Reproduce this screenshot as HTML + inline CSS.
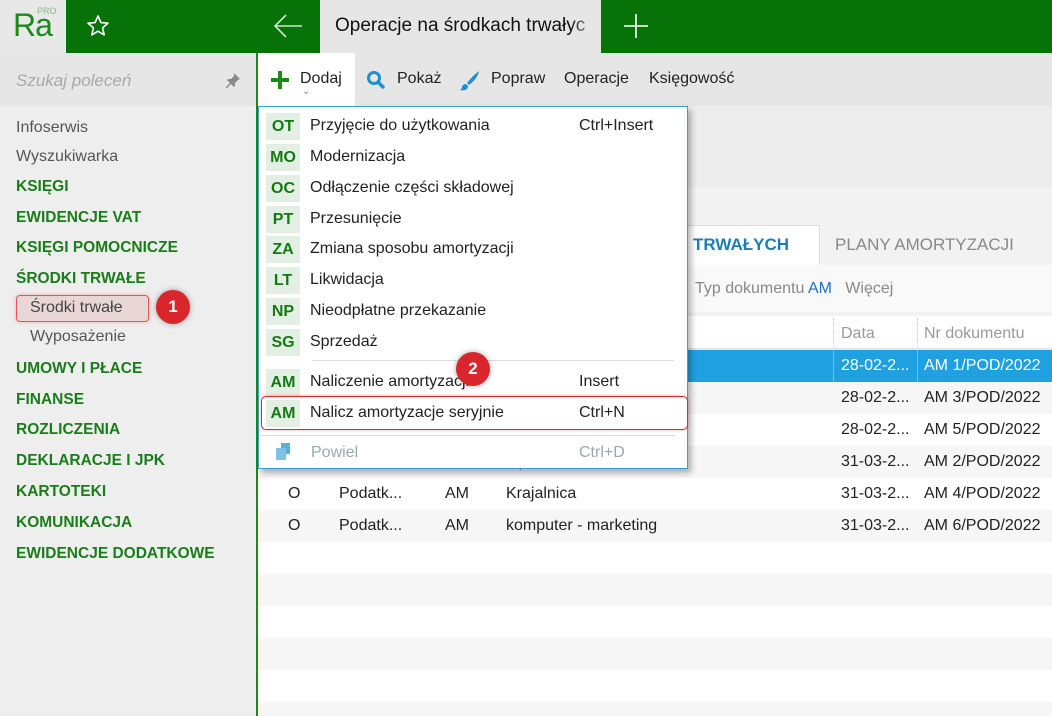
<!DOCTYPE html>
<html style="width:1052px;height:716px;overflow:hidden"><head><meta charset="utf-8"><style>
*{margin:0;padding:0;box-sizing:border-box}
body{width:1052px;height:716px;overflow:hidden;position:relative;font-family:"Segoe UI","Liberation Sans",sans-serif;font-size:16px;color:#222;background:#f2f2f2}
.a{position:absolute}
.g{color:#1a7d1a;font-weight:bold;font-size:15.5px}
.side div{position:absolute;left:16px;white-space:nowrap}
.row{position:absolute;left:258px;width:794px;height:32px}
.row span{position:absolute;top:7px;white-space:nowrap}
.mi{position:absolute;left:0;width:428px;height:31px}
.mi .b{position:absolute;left:7px;top:2px;width:34px;height:27px;background:#e4efe4;color:#137a13;font-weight:bold;font-size:16px;text-align:center;line-height:27px}
.mi .t{position:absolute;left:51px;top:6px;white-space:nowrap}
.mi .s{position:absolute;left:320px;top:6px;white-space:nowrap}
.badge{position:absolute;width:34px;height:34px;border-radius:50%;background:#d9262c;color:#fff;font-size:17px;font-weight:bold;text-align:center;line-height:34px;box-shadow:0 0 6px rgba(0,0,0,.35)}
</style></head><body>
<!-- top bar -->
<div class="a" style="left:0;top:0;width:66px;height:53px;background:#e8e8e8"></div>
<div class="a" style="left:13px;top:9px;font-size:32px;line-height:32px;color:#1a8a1a;font-family:'Liberation Sans Narrow','Liberation Sans',sans-serif;letter-spacing:-1px">Ra</div>
<div class="a" style="left:37px;top:6px;font-size:9px;color:#8ab88a;font-family:'Liberation Sans',sans-serif">PRO</div>
<div class="a" style="left:66px;top:0;width:254px;height:53px;background:#077207"></div>
<svg class="a" style="left:86px;top:14px" width="24" height="24" viewBox="0 0 24 24"><path d="M12 2l2.9 6.6 7.1.6-5.4 4.7 1.6 7-6.2-3.7-6.2 3.7 1.6-7L2 9.2l7.1-.6z" fill="none" stroke="#fff" stroke-width="1.6" stroke-linejoin="round"/></svg>
<svg class="a" style="left:273px;top:13px" width="30" height="26" viewBox="0 0 30 26"><path d="M29 13H2M13 2L2 13l11 11" fill="none" stroke="#cfe6cf" stroke-width="1.6"/></svg>
<div class="a" style="left:320px;top:0;width:281px;height:53px;background:#e6e6e6"></div>
<div class="a" style="left:335px;top:15px;font-size:19px;white-space:nowrap;width:250px;overflow:hidden;color:#111">Operacje na środkach trwałych</div>
<div class="a" style="left:570px;top:6px;width:31px;height:40px;background:linear-gradient(90deg,rgba(230,230,230,0),#e6e6e6)"></div>
<div class="a" style="left:601px;top:0;width:451px;height:53px;background:#077207"></div>
<svg class="a" style="left:623px;top:13px" width="26" height="26"><path d="M13 1v24M1 13h24" stroke="#fff" stroke-width="1.6"/></svg>
<!-- sidebar -->
<div class="a" style="left:0;top:53px;width:256px;height:663px;background:#eeeeee"></div>
<div class="a" style="left:0;top:53px;width:256px;height:53px;background:#e6e6e6"></div>
<div class="a" style="left:16px;top:71px;font-style:italic;color:#a8a8a8;font-size:17px">Szukaj poleceń</div>
<svg class="a" style="left:225px;top:72px" width="16" height="16" viewBox="0 0 16 16"><path d="M9 1l6 6-2 1-3 3 0 3-1 1-3-3-4 4-1 0 0-1 4-4-3-3 1-1 3 0 3-3z" fill="#8a8a8a"/></svg>
<div class="a" style="left:256px;top:53px;width:2px;height:663px;background:#1a8a1a"></div>
<div class="side">
<div style="top:119px;color:#555">Infoserwis</div>
<div style="top:148px;color:#555">Wyszukiwarka</div>
<div class="g" style="top:178px">KSIĘGI</div>
<div class="g" style="top:209px">EWIDENCJE VAT</div>
<div class="g" style="top:239px">KSIĘGI POMOCNICZE</div>
<div class="g" style="top:270px">ŚRODKI TRWAŁE</div>
<div class="a" style="left:16px;top:295px;width:133px;height:27px;border:1.5px solid #e8545a;border-radius:4px;background:#e9d7d8;box-shadow:0 0 4px rgba(230,80,80,.4)"></div>
<div style="left:30px;top:299px;color:#444">Środki trwałe</div>
<div style="left:30px;top:328px;color:#555">Wyposażenie</div>
<div class="g" style="top:360px">UMOWY I PŁACE</div>
<div class="g" style="top:391px">FINANSE</div>
<div class="g" style="top:421px">ROZLICZENIA</div>
<div class="g" style="top:452px">DEKLARACJE I JPK</div>
<div class="g" style="top:483px">KARTOTEKI</div>
<div class="g" style="top:514px">KOMUNIKACJA</div>
<div class="g" style="top:545px">EWIDENCJE DODATKOWE</div>
</div>
<div class="badge" style="left:156px;top:290px">1</div>
<!-- toolbar -->
<div class="a" style="left:258px;top:53px;width:794px;height:53px;background:#e6e6e6"></div>
<div class="a" style="left:258px;top:53px;width:97px;height:53px;background:#fff"></div>
<svg class="a" style="left:270px;top:70px" width="20" height="20"><path d="M10 1v18M1 10h18" stroke="#1a8a1a" stroke-width="4"/></svg>
<div class="a" style="left:300px;top:70px">Dodaj</div>
<div class="a" style="left:302px;top:86px;font-size:10px;color:#888">⌄</div>
<svg class="a" style="left:366px;top:70px" width="20" height="20"><circle cx="8" cy="8" r="5.5" fill="none" stroke="#1f8fd0" stroke-width="3"/><path d="M12 12l6 6" stroke="#1f8fd0" stroke-width="3.5"/></svg>
<div class="a" style="left:397px;top:70px">Pokaż</div>
<svg class="a" style="left:459px;top:69px" width="22" height="22"><path d="M20 2C16 5 11 10 8 14l2 2c4-3 9-8 10-14z" fill="#1f8fd0"/><path d="M7 15c-3 0-4 2-4 4l-2 2c4 1 8 0 8-4z" fill="#1f8fd0"/></svg>
<div class="a" style="left:491px;top:70px">Popraw</div>
<div class="a" style="left:564px;top:70px">Operacje</div>
<div class="a" style="left:649px;top:70px">Księgowość</div>
<!-- content bg -->
<div class="a" style="left:258px;top:106px;width:794px;height:81px;background:#ececec"></div>
<div class="a" style="left:258px;top:187px;width:794px;height:78px;background:#f2f2f2"></div>
<div class="a" style="left:672px;top:225px;width:148px;height:41px;background:#fff;border:1px solid #ddd;border-bottom:none"></div>
<div class="a" style="left:676px;top:235px;font-size:17px;font-weight:bold;color:#1b7fb5;white-space:nowrap">H TRWAŁYCH</div>
<div class="a" style="left:835px;top:235px;font-size:17px;color:#888;white-space:nowrap">PLANY AMORTYZACJI</div>
<div class="a" style="left:258px;top:265px;width:794px;height:47px;background:#f9f9f9"></div>
<div class="a" style="left:695px;top:280px;color:#888;white-space:nowrap">Typ dokumentu <span style="color:#2070c0">AM</span>&nbsp;&nbsp;&nbsp;Więcej</div>
<div class="a" style="left:258px;top:316px;width:794px;height:34px;background:#fff;border-bottom:2px solid #e4e4e4"></div>
<div class="a" style="left:833px;top:318px;height:30px;border-left:1px dotted #ccc"></div>
<div class="a" style="left:917px;top:318px;height:30px;border-left:1px dotted #ccc"></div>
<div class="a" style="left:841px;top:325px;color:#999">Data</div>
<div class="a" style="left:924px;top:325px;color:#999">Nr dokumentu</div>
<!-- rows -->
<div class="row" style="top:350px;background:#1fa0e0;color:#fff"><span style="left:583px">28-02-2...</span><span style="left:666px">AM 1/POD/2022</span><i class="a" style="left:575px;top:0;height:32px;border-left:1px solid #6cc2ec"></i><i class="a" style="left:659px;top:0;height:32px;border-left:1px solid #6cc2ec"></i></div>
<div class="row" style="top:382px;background:#f6f6f6"><span style="left:583px">28-02-2...</span><span style="left:666px">AM 3/POD/2022</span></div>
<div class="row" style="top:414px;background:#fff"><span style="left:583px">28-02-2...</span><span style="left:666px">AM 5/POD/2022</span></div>
<div class="row" style="top:446px;background:#f6f6f6"><span style="left:30px">O</span><span style="left:81px">Podatk...</span><span style="left:187px">AM</span><span style="left:248px">Opel Astra</span><span style="left:583px">31-03-2...</span><span style="left:666px">AM 2/POD/2022</span></div>
<div class="row" style="top:478px;background:#fff"><span style="left:30px">O</span><span style="left:81px">Podatk...</span><span style="left:187px">AM</span><span style="left:248px">Krajalnica</span><span style="left:583px">31-03-2...</span><span style="left:666px">AM 4/POD/2022</span></div>
<div class="row" style="top:510px;background:#f6f6f6"><span style="left:30px">O</span><span style="left:81px">Podatk...</span><span style="left:187px">AM</span><span style="left:248px">komputer - marketing</span><span style="left:583px">31-03-2...</span><span style="left:666px">AM 6/POD/2022</span></div>
<div class="row" style="top:542px;background:#fff"></div>
<div class="row" style="top:574px;background:#f6f6f6"></div>
<div class="row" style="top:606px;background:#fff"></div>
<div class="row" style="top:638px;background:#f6f6f6"></div>
<div class="row" style="top:670px;background:#fff"></div>
<div class="row" style="top:702px;height:14px;background:#f6f6f6"></div>
<!-- menu -->
<div class="a" style="left:258px;top:106px;width:430px;height:363px;background:#fff;border:1px solid #3a9fd8;box-shadow:3px 4px 6px rgba(0,0,0,.3)">
<div class="mi" style="top:4px"><div class="b">OT</div><div class="t">Przyjęcie do użytkowania</div><div class="s">Ctrl+Insert</div></div>
<div class="mi" style="top:35px"><div class="b">MO</div><div class="t">Modernizacja</div></div>
<div class="mi" style="top:66px"><div class="b">OC</div><div class="t">Odłączenie części składowej</div></div>
<div class="mi" style="top:97px"><div class="b">PT</div><div class="t">Przesunięcie</div></div>
<div class="mi" style="top:127px"><div class="b">ZA</div><div class="t">Zmiana sposobu amortyzacji</div></div>
<div class="mi" style="top:158px"><div class="b">LT</div><div class="t">Likwidacja</div></div>
<div class="mi" style="top:189px"><div class="b">NP</div><div class="t">Nieodpłatne przekazanie</div></div>
<div class="mi" style="top:220px"><div class="b">SG</div><div class="t">Sprzedaż</div></div>
<div class="a" style="left:53px;top:253px;width:362px;height:1px;background:#ddd"></div>
<div class="mi" style="top:260px"><div class="b">AM</div><div class="t">Naliczenie amortyzacji</div><div class="s">Insert</div></div>
<div class="mi" style="top:291px"><div class="b">AM</div><div class="t">Nalicz amortyzacje seryjnie</div><div class="s">Ctrl+N</div></div>
<div class="a" style="left:2px;top:289px;width:427px;height:34px;border:1.5px solid #e0262c;border-radius:5px;box-shadow:0 0 3px rgba(220,40,40,.4)"></div>
<div class="a" style="left:2px;top:328px;width:414px;height:1px;background:#ddd"></div>
<svg class="a" style="left:15px;top:335px" width="20" height="20"><rect x="7" y="1" width="9" height="11" fill="#5ab0d8"/><rect x="2" y="6" width="10" height="12" fill="#7cc3e6"/></svg>
<div class="a" style="left:52px;top:337px;color:#9aa">Powiel</div>
<div class="a" style="left:320px;top:337px;color:#9aa">Ctrl+D</div>
</div>
<div class="badge" style="left:456px;top:352px">2</div>
</body></html>
